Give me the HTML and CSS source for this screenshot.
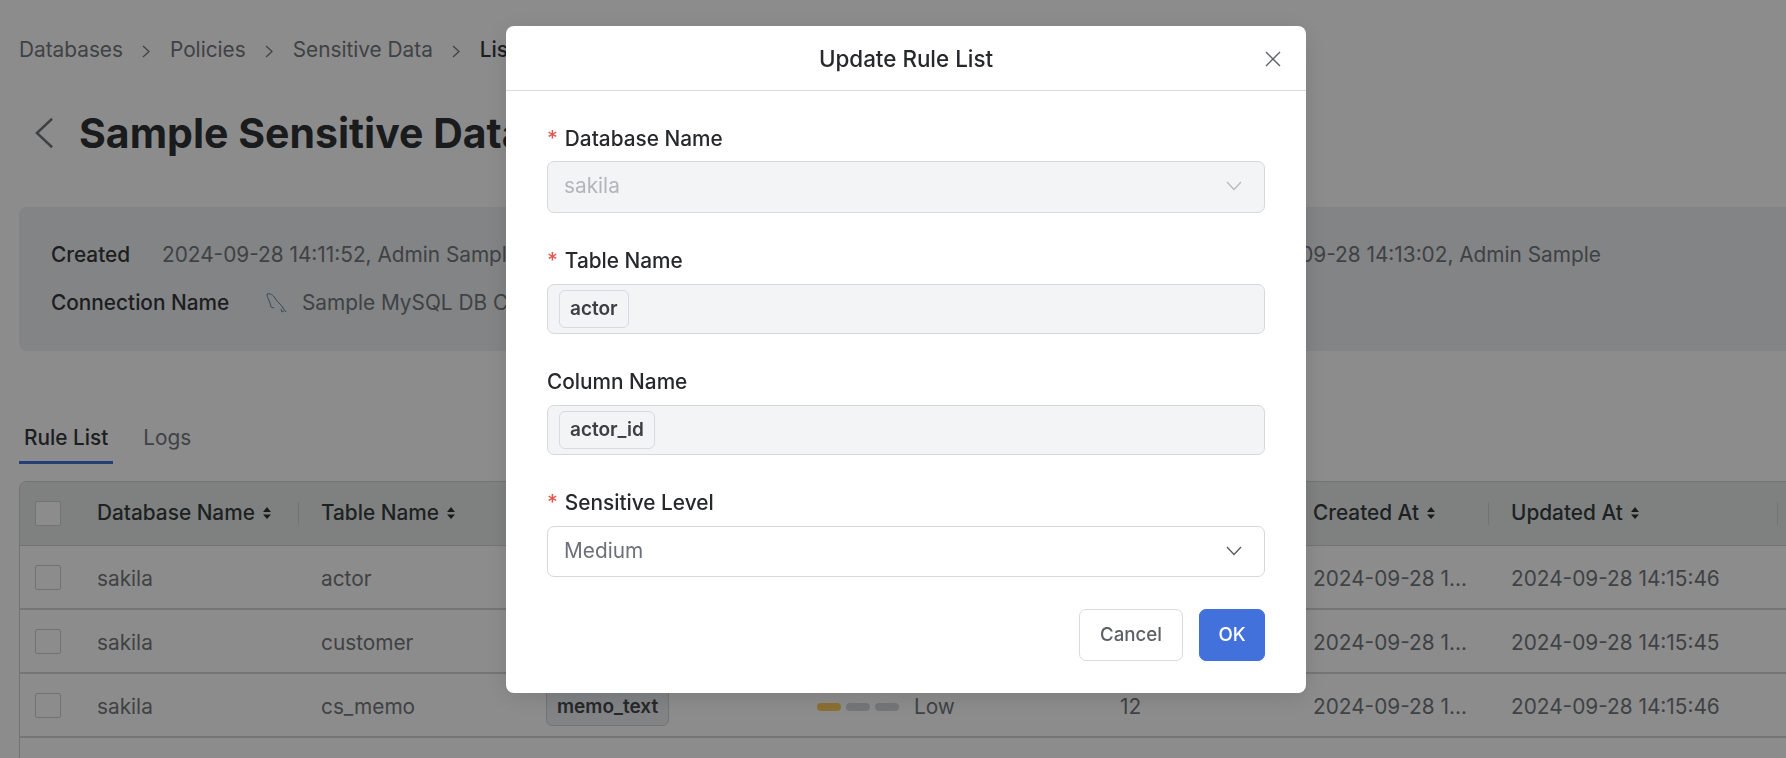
FILE: index.html

```html
<!DOCTYPE html>
<html lang="en">

<head>
    <meta charset="UTF-8" />
    <meta name="viewport" content="width=device-width, initial-scale=1.0" />
    <title>Sample Sensitive Data</title>

    <link rel="stylesheet" href="styles.css">
</head>

<body>
    <main class="page">
        <nav class="breadcrumb">
            <a>Databases</a>
            <svg class="crumb-icon" viewBox="0 0 8 13"><path d="M1 1l6 5.5L1 12" /></svg>
            <a>Policies</a>
            <svg class="crumb-icon" viewBox="0 0 8 13"><path d="M1 1l6 5.5L1 12" /></svg>
            <a>Sensitive Data</a>
            <svg class="crumb-icon" viewBox="0 0 8 13"><path d="M1 1l6 5.5L1 12" /></svg>
            <span class="crumb-current">List</span>
        </nav>

        <header class="title-row">
            <svg class="back-icon" viewBox="0 0 20 32"><path d="M18 1L2 16l16 15" /></svg>
            <h1>Sample Sensitive Data</h1>
        </header>

        <section class="info-card">
            <div class="info-row">
                <div class="info-item info-created">
                    <span class="info-label">Created</span>
                    <span class="info-value">2024-09-28 14:11:52, Admin Sample</span>
                </div>
                <div class="info-item">
                    <span class="info-label">Updated</span>
                    <span class="info-value">2024-09-28 14:13:02, Admin Sample</span>
                </div>
            </div>
            <div class="info-row">
                <div class="info-item">
                    <span class="info-label info-label-wide">Connection Name</span>
                    <svg class="db-icon" viewBox="0 0 22 22">
                        <path d="M1 2c3-1 6 1 8 4 2 4 6 6 8 10l3 4" />
                        <path d="M1 2c0 3 2 6 3 9l1 4 3 1" />
                        <path d="M15 17l1 3 2-1" />
                    </svg>
                    <span class="info-value">Sample MySQL DB Connection</span>
                </div>
            </div>
        </section>

        <div class="tabs">
            <a class="tab tab-active">Rule List</a>
            <a class="tab">Logs</a>
        </div>

        <div class="table-wrap">
            <table class="rule-table">
                <colgroup>
                    <col class="col-check">
                    <col class="col-db">
                    <col class="col-table">
                    <col class="col-column">
                    <col class="col-level">
                    <col class="col-count">
                    <col class="col-created">
                    <col class="col-updated">
                    <col class="col-action">
                </colgroup>
                <thead>
                    <tr>
                        <th class="cell-check"><span class="checkbox"></span></th>
                        <th><span class="th-inner">Database Name<svg class="sort-icon" viewBox="0 0 10 14"><path d="M5 1l4 5H1zM5 13L1 8.500h8z" /></svg></span></th>
                        <th><span class="th-inner">Table Name<svg class="sort-icon" viewBox="0 0 10 14"><path d="M5 1l4 5H1zM5 13L1 8.500h8z" /></svg></span></th>
                        <th><span class="th-inner">Column Name</span></th>
                        <th><span class="th-inner">Sensitive Level</span></th>
                        <th></th>
                        <th><span class="th-inner">Created At<svg class="sort-icon" viewBox="0 0 10 14"><path d="M5 1l4 5H1zM5 13L1 8.500h8z" /></svg></span></th>
                        <th><span class="th-inner">Updated At<svg class="sort-icon" viewBox="0 0 10 14"><path d="M5 1l4 5H1zM5 13L1 8.500h8z" /></svg></span></th>
                        <th></th>
                    </tr>
                </thead>
                <tbody>
                    <tr>
                        <td class="cell-check"><span class="checkbox"></span></td>
                        <td>sakila</td>
                        <td>actor</td>
                        <td><span class="chip">actor_id</span></td>
                        <td>
                            <span class="level">
                                <i class="bar bar-on"></i><i class="bar bar-on"></i><i class="bar"></i>
                                <span class="level-text">Medium</span>
                            </span>
                        </td>
                        <td></td>
                        <td class="cell-clip">2024-09-28 14:15:46</td>
                        <td>2024-09-28 14:15:46</td>
                        <td></td>
                    </tr>
                    <tr>
                        <td class="cell-check"><span class="checkbox"></span></td>
                        <td>sakila</td>
                        <td>customer</td>
                        <td></td>
                        <td></td>
                        <td></td>
                        <td class="cell-clip">2024-09-28 14:15:45</td>
                        <td>2024-09-28 14:15:45</td>
                        <td></td>
                    </tr>
                    <tr>
                        <td class="cell-check"><span class="checkbox"></span></td>
                        <td>sakila</td>
                        <td>cs_memo</td>
                        <td><span class="chip">memo_text</span></td>
                        <td>
                            <span class="level">
                                <i class="bar bar-on"></i><i class="bar"></i><i class="bar"></i>
                                <span class="level-text">Low</span>
                            </span>
                        </td>
                        <td>12</td>
                        <td class="cell-clip">2024-09-28 14:15:46</td>
                        <td>2024-09-28 14:15:46</td>
                        <td></td>
                    </tr>
                    <tr>
                        <td colspan="9"></td>
                    </tr>
                </tbody>
            </table>
        </div>
    </main>

    <div class="overlay">
        <div class="modal">
            <div class="modal-header">
                <h2>Update Rule List</h2>
                <svg class="close-icon" viewBox="0 0 16 16"><path d="M1 1l14 14M15 1L1 15" /></svg>
            </div>

            <form class="modal-body">
                <div class="field">
                    <label class="field-label"><span class="required">*</span>Database Name</label>
                    <div class="select select-disabled">
                        <span>sakila</span>
                        <svg class="select-icon" viewBox="0 0 16 10"><path d="M1 1l7 7.500L15 1" /></svg>
                    </div>
                </div>

                <div class="field">
                    <label class="field-label"><span class="required">*</span>Table Name</label>
                    <div class="tags-input">
                        <span class="tag">actor</span>
                    </div>
                </div>

                <div class="field">
                    <label class="field-label">Column Name</label>
                    <div class="tags-input">
                        <span class="tag">actor_id</span>
                    </div>
                </div>

                <div class="field">
                    <label class="field-label"><span class="required">*</span>Sensitive Level</label>
                    <div class="select">
                        <span>Medium</span>
                        <svg class="select-icon" viewBox="0 0 16 10"><path d="M1 1l7 7.500L15 1" /></svg>
                    </div>
                </div>

                <div class="modal-actions">
                    <button type="button" class="btn">Cancel</button>
                    <button type="button" class="btn btn-primary">OK</button>
                </div>
            </form>
        </div>
    </div>
</body>

</html>
```

FILE: styles.css

```css
html,
body {
    height: 100%;
    margin: 0;
    overflow: hidden;
}

body {
    font-family: Inter, "Noto Sans", sans-serif;
    font-size: 20.8px;
    line-height: 24px;
    background: white;
    color: #74787d;
}

svg {
    fill: none;
    flex-shrink: 0;
}

.page {
    width: 1900px;
    padding: 38px 0 0 19px;
}

/* breadcrumb */
.breadcrumb {
    display: flex;
    align-items: center;
    gap: 19.5px;
}

.crumb-icon {
    width: 8px;
    height: 13px;
    margin-top: 2px;
    stroke: #74787d;
    stroke-width: 1.3;
}

.crumb-current {
    color: #34373b;
    font-weight: 500;
}

/* title */
.title-row {
    display: flex;
    align-items: center;
    gap: 25px;
    margin-top: 46px;
    padding-left: 16px;
}

.title-row h1 {
    margin: 0;
    font-size: 41px;
    line-height: 50px;
    font-weight: 700;
    color: #2f3236;
}

.back-icon {
    width: 19px;
    height: 32px;
    stroke: #74787d;
    stroke-width: 2.6;
}

/* info card */
.info-card {
    width: 1880px;
    height: 144px;
    box-sizing: border-box;
    margin-top: 49px;
    padding: 36px 32px;
    background: #eef0f3;
    border-radius: 8px;
}

.info-row {
    display: flex;
    align-items: center;
    height: 24px;
    margin-bottom: 24px;
}

.info-item {
    display: flex;
    align-items: center;
}

.info-created {
    width: 1077px;
}

.info-label {
    width: 111px;
    color: #34373b;
    font-weight: 500;
}

.info-label-wide {
    width: 215px;
}

.db-icon {
    width: 22px;
    height: 22px;
    margin-right: 14px;
    stroke: #4d7f9e;
    stroke-width: 0.9;
}

/* tabs */
.tabs {
    display: flex;
    gap: 25px;
    margin-top: 75px;
}

.tab {
    padding: 0 5px 11px;
    border-bottom: 3px solid transparent;
}

.tab-active {
    color: #34373b;
    font-weight: 500;
    border-bottom-color: #4371db;
}

/* table */
.table-wrap {
    margin-top: 17px;
    width: 1880px;
    border: 1px solid #d1d2d3;
    border-bottom: none;
    border-radius: 8px 0 0 0;
}

.rule-table {
    table-layout: fixed;
    width: 1878px;
    border-collapse: separate;
    border-spacing: 0;
}

.col-check { width: 54px; }
.col-db { width: 224px; }
.col-table { width: 225px; }
.col-column { width: 271px; }
.col-level { width: 303px; }
.col-count { width: 193px; }
.col-created { width: 198px; }
.col-updated { width: 289px; }
.col-action { width: 121px; }

.rule-table th {
    position: relative;
    height: 64px;
    box-sizing: border-box;
    padding: 0 23px;
    text-align: left;
    font-weight: 500;
    color: #383c3e;
    background: #e7eceb;
    border-bottom: 1px solid #d1d2d3;
    border-radius: 8px 0 0 0;
}

.rule-table th:not(:first-child) {
    border-radius: 0;
}

.rule-table th:not(:first-child)::after {
    content: "";
    position: absolute;
    z-index: 1;
    right: -1px;
    top: 20px;
    height: 23px;
    width: 1px;
    background: #cfd3d3;
}

.th-inner {
    display: flex;
    align-items: center;
    gap: 7px;
    padding-bottom: 2px;
}

.sort-icon {
    width: 10px;
    height: 14px;
    fill: #2e3133;
}

.rule-table td {
    height: 64px;
    box-sizing: border-box;
    padding: 3px 23px 0;
    white-space: nowrap;
    border-bottom: 2px solid #d4d5d6;
}

.rule-table .cell-check {
    padding: 0 0 0 15px;
}

.rule-table .cell-clip {
    padding-right: 12px;
    overflow: hidden;
    text-overflow: ellipsis;
}

.checkbox {
    display: block;
    width: 24px;
    height: 23px;
    background: white;
    border: 1px solid #d1d2d4;
    border-radius: 2px;
}

.chip {
    display: inline-block;
    padding: 6px 10px;
    color: #45484c;
    font-size: 19px;
    font-weight: 600;
    background: #eceef2;
    border: 1px solid #cfd2d6;
    border-radius: 6px;
}

.level {
    display: flex;
    align-items: center;
    gap: 5px;
}

.bar {
    width: 24px;
    height: 8px;
    background: #d3d7da;
    border-radius: 4px;
}

.bar-on {
    background: #fbcc5f;
}

.level-text {
    margin-left: 10px;
}

/* modal */
.overlay {
    position: fixed;
    z-index: 10;
    inset: 0;
    display: flex;
    align-items: flex-start;
    padding: 26px 0 0 506px;
    background: rgba(0, 0, 0, 0.45);
}

.modal {
    width: 800px;
    background: white;
    border-radius: 8px;
    box-shadow: 0 4px 24px rgba(0, 0, 0, 0.12);
}

.modal-header {
    display: flex;
    align-items: center;
    justify-content: center;
    height: 64px;
    box-sizing: content-box;
    position: relative;
    border-bottom: 1px solid #d9dadd;
}

.modal-header h2 {
    margin: 0;
    padding-top: 2px;
    font-size: 22.4px;
    line-height: 28px;
    font-weight: 500;
    color: #26282b;
}

.close-icon {
    position: absolute;
    right: 25px;
    top: 25px;
    width: 16px;
    height: 16px;
    stroke: #5f6368;
    stroke-width: 1.4;
}

.modal-body {
    display: flex;
    flex-direction: column;
    gap: 35px;
    padding: 35px 41px 32px;
}

.field-label {
    display: block;
    padding-top: 1px;
    margin-bottom: 11px;
    color: #26282b;
    font-weight: 500;
}

.field:first-child .field-label {
    margin-bottom: 10px;
}

.required {
    margin-right: 7px;
    color: #e2574c;
}

.select {
    display: flex;
    align-items: center;
    justify-content: space-between;
    height: 51px;
    box-sizing: border-box;
    padding: 0 22px 2px 16px;
    color: #6b7178;
    border: 1px solid #d6d8dc;
    border-radius: 7px;
}

.select-disabled {
    height: 52px;
    color: #b3b5b9;
    background: #f3f4f6;
}

.select-icon {
    width: 16px;
    height: 10px;
    stroke: #55585c;
    stroke-width: 1.3;
}

.select-disabled .select-icon {
    stroke: #b8b9bc;
}

.tags-input {
    display: flex;
    align-items: center;
    height: 50px;
    box-sizing: border-box;
    padding: 0 11px;
    background: #f3f4f6;
    border: 1px solid #d6d8dc;
    border-radius: 7px;
}

.tag {
    padding: 6px 10px;
    color: #3d4043;
    font-size: 19px;
    font-weight: 600;
    background: #f3f4f6;
    border: 1px solid #d7dade;
    border-radius: 6px;
}

.modal-actions {
    display: flex;
    justify-content: flex-end;
    gap: 16px;
    margin-top: -3px;
}

.btn {
    width: 104px;
    height: 52px;
    padding: 0 0 2px;
    font-family: inherit;
    font-size: 18.7px;
    font-weight: 500;
    color: #5c6066;
    background: white;
    border: 1px solid #d8dade;
    border-radius: 7px;
}

.btn-primary {
    width: 66px;
    color: white;
    background: #4371db;
    border-color: #4371db;
}
```
